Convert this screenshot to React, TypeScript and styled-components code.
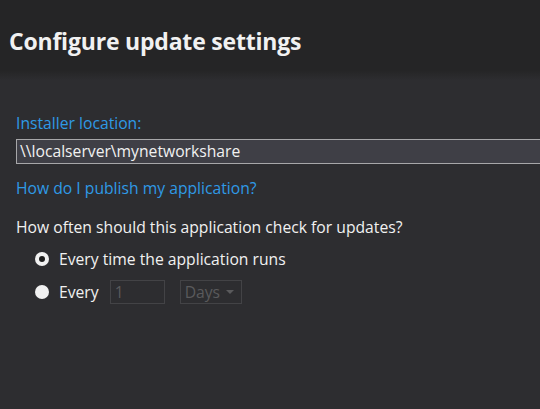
import React from "react";
import styled, { createGlobalStyle } from "styled-components";

const Global = createGlobalStyle`
  html, body { margin: 0; padding: 0; background: #2d2d30; }
  body { font-family: "Open Sans", "Noto Sans", sans-serif; overflow: hidden; }
`;

const Page = styled.div`
  width: 540px;
  height: 409px;
  background: #2d2d30;
  display: flex;
  flex-direction: column;
  overflow: hidden;
`;

const Header = styled.header`
  height: 80px;
  background: linear-gradient(to bottom, #252526 0%, #252526 88%, #2d2d30 100%);
  padding: 26px 0 0 9px;
  box-sizing: border-box;
`;

const Title = styled.h1`
  margin: 0;
  font-size: 23px;
  line-height: 30px;
  font-weight: 700;
  color: #f1f1f1;
  letter-spacing: -0.2px;
`;

const Body = styled.div`
  display: flex;
  flex-direction: column;
  padding: 33px 0 0 16px;
`;

const Label = styled.div`
  color: #2f9ae6;
  font-size: 15.7px;
  line-height: 20px;
`;

const PathInput = styled.div`
  margin-top: 6px;
  height: 25px;
  box-sizing: border-box;
  border: 1px solid #a7a7a9;
  border-right: none;
  background: #3f3f46;
  color: #f1f1f1;
  font-size: 15.7px;
  line-height: 22px;
  padding-left: 3px;
  margin-right: -2px;
`;

const Link = styled.div`
  margin-top: 14px;
  color: #2f9ae6;
  font-size: 15.7px;
  line-height: 20px;
`;

const Question = styled.div`
  margin-top: 19px;
  color: #f1f1f1;
  font-size: 15.7px;
  line-height: 20px;
`;

const Options = styled.div`
  display: flex;
  flex-direction: column;
  gap: 9px;
  padding: 10px 0 0 19px;
`;

const OptionRow = styled.div`
  display: flex;
  align-items: center;
  height: 24px;
  color: #f1f1f1;
  font-size: 15.7px;
`;

const Radio = styled.span<{ $checked?: boolean }>`
  width: 14px;
  height: 14px;
  border-radius: 50%;
  background: #f1f1f1;
  box-sizing: border-box;
  margin-right: 10px;
  display: flex;
  align-items: center;
  justify-content: center;
  &::after {
    content: "";
    width: 6px;
    height: 6px;
    border-radius: 50%;
    background: #1e1e1e;
    display: ${(p) => (p.$checked ? "block" : "none")};
  }
`;

const DisabledBox = styled.div<{ $width: number }>`
  width: ${(p) => p.$width}px;
  height: 24px;
  box-sizing: border-box;
  border: 1px solid #434346;
  color: #5a5a5c;
  font-size: 15.7px;
  line-height: 22px;
  padding-left: 4px;
  display: flex;
  align-items: center;
  gap: 6px;
`;

const NumberBox = styled(DisabledBox)`
  margin-left: 11px;
`;

const SelectBox = styled(DisabledBox)`
  margin-left: 15px;
`;

const Caret = styled.span`
  width: 0;
  height: 0;
  border-left: 4px solid transparent;
  border-right: 4px solid transparent;
  border-top: 4px solid #5a5a5c;
`;

export default function App() {
  return (
    <Page>
      <Global />
      <Header>
        <Title>Configure update settings</Title>
      </Header>
      <Body>
        <Label>Installer location:</Label>
        <PathInput>\\localserver\mynetworkshare</PathInput>
        <Link>How do I publish my application?</Link>
        <Question>How often should this application check for updates?</Question>
        <Options>
          <OptionRow>
            <Radio $checked />
            Every time the application runs
          </OptionRow>
          <OptionRow>
            <Radio />
            Every
            <NumberBox $width={55}>1</NumberBox>
            <SelectBox $width={62}>
              Days <Caret />
            </SelectBox>
          </OptionRow>
        </Options>
      </Body>
    </Page>
  );
}
